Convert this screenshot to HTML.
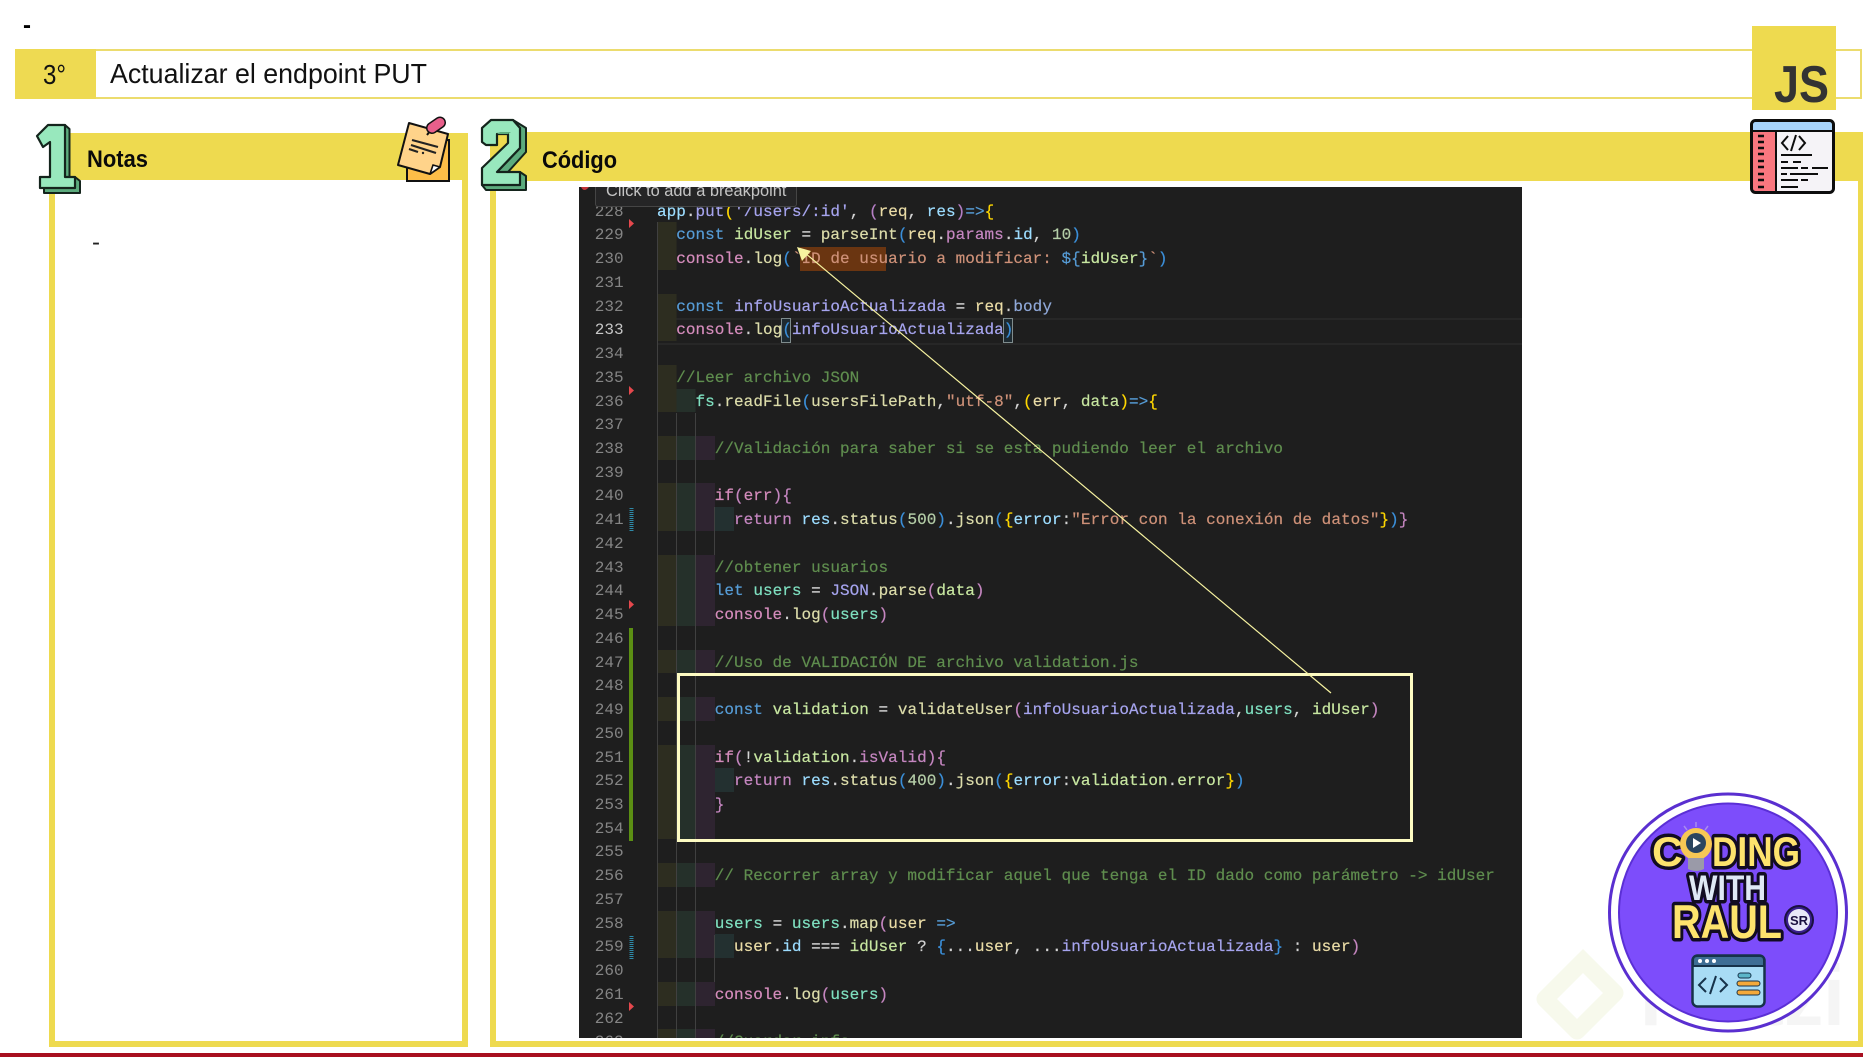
<!DOCTYPE html>
<html lang="es"><head><meta charset="utf-8"><title>Actualizar el endpoint PUT</title>
<style>
html,body{margin:0;padding:0;background:#fff}
body{position:relative;width:1863px;height:1057px;overflow:hidden;font-family:"Liberation Sans",sans-serif}
svg.o{position:absolute;left:0;top:0;width:1863px;height:1057px}
#code{position:absolute;left:579px;top:187px;width:943px;height:851px;background:#1e1e1e;overflow:hidden}
#code .abs{position:absolute}
#nums{position:absolute;left:0;top:13.66px;width:44.6px;margin:0;text-align:right;font:16px/23.74px "Liberation Mono",monospace;color:#858585;letter-spacing:.03px}
#nums b{font-weight:normal;color:#c6c6c6}
#lines{position:absolute;left:78px;top:11.66px;width:865px;font:16px/27.74px "Liberation Mono",monospace;letter-spacing:.03px;color:#d4d4d4;-webkit-text-stroke:.2px}
.l{height:23.74px;white-space:pre}
.i1{padding-left:19.26px;background:linear-gradient(90deg,#2d2d20 19.26px,transparent 0)}
.i2{padding-left:38.52px;background:linear-gradient(90deg,#2d2d20 19.26px,#25302a 0,#25302a 38.52px,transparent 0)}
.i3{padding-left:57.78px;background:linear-gradient(90deg,#2d2d20 19.26px,#25302a 0,#25302a 38.52px,#2e2430 0,#2e2430 57.78px,transparent 0)}
.i4{padding-left:77.04px;background:linear-gradient(90deg,#2d2d20 19.26px,#25302a 0,#25302a 38.52px,#2e2430 0,#2e2430 57.78px,#233030 0,#233030 77.04px,transparent 0)}
.k{color:#569cd6}.f{color:#dcdcaa}.c{color:#5f8d4e}.s{color:#ce9178}.n{color:#b5cea8}.g{color:#c7e6a0}
.p{color:#d58cbc}.y{color:#ffd700}.b{color:#3b8fd9}.m{color:#c586c0}.u{color:#a6a4ee}.t{color:#7fe0c0}.r{color:#eadca6}.a{color:#9cdcfe}.o2{color:#b57fc6}
.gd{position:absolute;width:1px;background:#404040}
</style></head><body>

<svg class="o" viewBox="0 0 1863 1057" xmlns="http://www.w3.org/2000/svg">
  <text x="23" y="33" font-family="Liberation Sans" font-weight="700" font-size="24" fill="#000">-</text>
  <rect x="16" y="50" width="1845" height="48" fill="#fff" stroke="#ecdc6e" stroke-width="2"/>
  <rect x="15" y="49" width="81" height="50" fill="#eeda52"/>
  <text x="43" y="84" font-family="Liberation Sans" font-size="28" textLength="23" lengthAdjust="spacingAndGlyphs" fill="#111">3°</text>
  <text x="110" y="83" font-family="Liberation Sans" font-size="28" textLength="317" lengthAdjust="spacingAndGlyphs" fill="#111">Actualizar el endpoint PUT</text>

  <rect x="70" y="133" width="398" height="47" fill="#eeda4f"/>
  <rect x="49" y="180" width="6" height="867" fill="#eeda4f"/>
  <rect x="462" y="180" width="6" height="867" fill="#eeda4f"/>
  <rect x="49" y="1041" width="419" height="6" fill="#eeda4f"/>
  <text x="87" y="167" font-family="Liberation Sans" font-weight="700" font-size="24" textLength="61" lengthAdjust="spacingAndGlyphs" fill="#0a0a0a">Notas</text>
  <text x="92" y="250" font-family="Liberation Sans" font-size="24" fill="#222">-</text>

  <rect x="490" y="132" width="1373" height="49" fill="#eeda4f"/>
  <rect x="490" y="181" width="6" height="866" fill="#eeda4f"/>
  <rect x="1858" y="181" width="5" height="866" fill="#eeda4f"/>
  <rect x="490" y="1041" width="1373" height="6" fill="#eeda4f"/>
  <text x="542" y="168" font-family="Liberation Sans" font-weight="700" font-size="24" textLength="75" lengthAdjust="spacingAndGlyphs" fill="#0a0a0a">Código</text>
  <rect x="0" y="1053" width="1863" height="4" fill="#a80f20"/>

  <!-- watermark -->
  <g fill="none" stroke="#f7f9ec" stroke-width="17" stroke-linejoin="round"><path d="M1577 955 L1615 993 L1577 1031 L1545 999 L1577 967"/></g>
  <text x="1640" y="1025" font-family="Liberation Sans" font-weight="700" font-size="85" textLength="205" lengthAdjust="spacingAndGlyphs" fill="#f5f5f5">Platzi</text>
</svg>

<div id="code">
  <div class="abs" style="left:221px;top:60px;width:86px;height:24px;background:#6a3511"></div>
  <div class="abs" style="left:78px;top:131px;width:865px;height:23px;border-top:2px solid #272727;border-bottom:2px solid #272727"></div>
  <div class="abs" style="left:202px;top:131px;width:8px;height:23px;border:1px solid #7f8c8d;background:#1e2a30"></div>
  <div class="abs" style="left:424px;top:131px;width:8px;height:23px;border:1px solid #7f8c8d;background:#1e2a30"></div>
  <pre id="nums">228
229
230
231
232
<b>233</b>
234
235
236
237
238
239
240
241
242
243
244
245
246
247
248
249
250
251
252
253
254
255
256
257
258
259
260
261
262
263</pre>
  <div id="lines">
<div class="l"><span class="a">app</span>.<span class="u">put</span><span class="y">(</span><span class="u">'/users/:id'</span>, <span class="o2">(</span><span class="r">req</span>, <span class="a">res</span><span class="o2">)</span><span class="k">=&gt;</span><span class="y">{</span></div>
<div class="l i1"><span class="k">const</span> <span class="g">idUser</span> = <span class="f">parseInt</span><span class="b">(</span><span class="r">req</span>.<span class="m">params</span>.<span class="a">id</span>, <span class="n">10</span><span class="b">)</span></div>
<div class="l i1"><span class="p">console</span>.<span class="f">log</span><span class="b">(</span><span class="s">`ID de usuario a modificar: </span><span class="k">${</span><span class="g">idUser</span><span class="k">}</span><span class="s">`</span><span class="b">)</span></div>
<div class="l"></div>
<div class="l i1"><span class="k">const</span> <span class="u">infoUsuarioActualizada</span> = <span class="r">req</span>.<span class="k" style="color:#8fa8d8">body</span></div>
<div class="l i1"><span class="p">console</span>.<span class="f">log</span><span class="b">(</span><span class="u">infoUsuarioActualizada</span><span class="b">)</span></div>
<div class="l"></div>
<div class="l i1"><span class="c">//Leer archivo JSON</span></div>
<div class="l i2"><span class="t">fs</span>.<span class="f">readFile</span><span class="b">(</span><span class="f">usersFilePath</span>,<span class="s">"utf-8"</span>,<span class="y">(</span><span class="r">err</span>, <span class="g">data</span><span class="y">)</span><span class="k">=&gt;</span><span class="y">{</span></div>
<div class="l"></div>
<div class="l i3"><span class="c">//Validación para saber si se esta pudiendo leer el archivo</span></div>
<div class="l"></div>
<div class="l i3"><span class="p">if</span><span class="m">(</span><span class="p">err</span><span class="m">){</span></div>
<div class="l i4"><span class="m">return</span> <span class="a">res</span>.<span class="f">status</span><span class="b">(</span><span class="n">500</span><span class="b">)</span>.<span class="f">json</span><span class="b">(</span><span class="y">{</span><span class="a">error</span>:<span class="s">"Error con la conexión de datos"</span><span class="y">}</span><span class="b">)</span><span class="m">}</span></div>
<div class="l"></div>
<div class="l i3"><span class="c">//obtener usuarios</span></div>
<div class="l i3"><span class="k">let</span> <span class="t">users</span> = <span class="u">JSON</span>.<span class="f">parse</span><span class="m">(</span><span class="g">data</span><span class="m">)</span></div>
<div class="l i3"><span class="p">console</span>.<span class="f">log</span><span class="m">(</span><span class="t">users</span><span class="m">)</span></div>
<div class="l"></div>
<div class="l i3"><span class="c">//Uso de VALIDACIÓN DE archivo validation.js</span></div>
<div class="l"></div>
<div class="l i3"><span class="k">const</span> <span class="g">validation</span> = <span class="f">validateUser</span><span class="m">(</span><span class="u">infoUsuarioActualizada</span>,<span class="t">users</span>, <span class="g">idUser</span><span class="m">)</span></div>
<div class="l"></div>
<div class="l i3"><span class="p">if</span><span class="m">(</span>!<span class="g">validation</span>.<span class="m">isValid</span><span class="m">){</span></div>
<div class="l i4"><span class="m">return</span> <span class="a">res</span>.<span class="f">status</span><span class="b">(</span><span class="n">400</span><span class="b">)</span>.<span class="f">json</span><span class="b">(</span><span class="y">{</span><span class="a">error</span>:<span class="g">validation</span>.<span class="g">error</span><span class="y">}</span><span class="b">)</span></div>
<div class="l i3"><span class="m">}</span></div>
<div class="l i3"></div>
<div class="l"></div>
<div class="l i3"><span class="c">// Recorrer array y modificar aquel que tenga el ID dado como parámetro -&gt; idUser</span></div>
<div class="l"></div>
<div class="l i3"><span class="t">users</span> = <span class="t">users</span>.<span class="f">map</span><span class="m">(</span><span class="r">user</span> <span class="k">=&gt;</span></div>
<div class="l i4"><span class="r">user</span>.<span class="a">id</span> === <span class="g">idUser</span> ? <span class="b">{</span>...<span class="r">user</span>, ...<span class="u">infoUsuarioActualizada</span><span class="b">}</span> : <span class="r">user</span><span class="m">)</span></div>
<div class="l"></div>
<div class="l i3"><span class="p">console</span>.<span class="f">log</span><span class="m">(</span><span class="t">users</span><span class="m">)</span></div>
<div class="l"></div>
<div class="l i3"><span class="c">//Guardar info</span></div>
  </div>
  <div class="gd" style="left:78px;top:35px;bottom:0"></div>
  <div class="gd" style="left:97px;top:226px;bottom:0"></div>
  <div class="gd" style="left:116px;top:226px;bottom:0"></div>
  <div class="gd" style="left:135px;top:320px;height:47.5px"></div>
  <div class="gd" style="left:135px;top:747.6px;height:47.5px"></div>
  <div class="abs" style="left:16px;top:0;width:202px;height:20px;box-sizing:border-box;background:#252526;border:1px solid #454545;border-top:0;border-radius:0 0 3px 3px"></div>
  <div class="abs" style="left:27px;top:-7px;font:16.4px/22px 'Liberation Sans',sans-serif;color:#c4c4c4;white-space:pre">Click to add a breakpoint</div>
  <svg class="abs" style="left:0;top:0" width="943" height="851" viewBox="579 187 943 851" xmlns="http://www.w3.org/2000/svg">
    <polygon points="629,219 634,223.5 629,228" fill="#e5484d"/>
    <polygon points="629,386 634,390.5 629,395" fill="#e5484d"/>
    <polygon points="629,600 634,604.5 629,609" fill="#e5484d"/>
    <polygon points="629,1002 634,1006.5 629,1011" fill="#e5484d"/>
    <path d="M581 187 Q584 193 589 187Z" fill="#c0343a"/>
    <line x1="631.5" y1="508" x2="631.5" y2="532" stroke="#2f8aa8" stroke-width="4" stroke-dasharray="1 1"/>
    <line x1="631.5" y1="936" x2="631.5" y2="960" stroke="#2f8aa8" stroke-width="4" stroke-dasharray="1 1"/>
    <rect x="629" y="628" width="4" height="213" fill="#5b8f13"/>
    <rect x="678.5" y="674.5" width="733" height="166" fill="none" stroke="#fdfbc2" stroke-width="3"/>
    <line x1="1331" y1="693" x2="805" y2="253" stroke="#f7f3a0" stroke-width="1.2"/>
    <polygon points="797,247 811,251 802,261" fill="#f7f3a0"/>
  </svg>
</div>

<svg class="o" viewBox="0 0 1863 1057" xmlns="http://www.w3.org/2000/svg">
  <!-- digit 1 -->
  <path d="M40 177 L44 181 V193 H80 V181 L75 177 Z M65 125 L69.5 129 V177 H65 Z" fill="#5cab7d" stroke="#14241c" stroke-width="2" stroke-linejoin="round"/>
  <path d="M37 136 L48 125 H65 V177 H75 V188 H40 V177 H50 V142 L43 147 Z" fill="#98e8bd" stroke="#14241c" stroke-width="2.2" stroke-linejoin="round"/>
  <!-- digit 2 -->
  <path d="M513 120 L526 128 V152 L508 172 H520 L526 176 V190 H486 L482 185 H520 V172 H497 L520 148 V128 Z" fill="#5cab7d" stroke="#14241c" stroke-width="2" stroke-linejoin="round"/>
  <path d="M482 128 L491 120 H513 L520 128 V148 L497 172 H520 V185 H482 V168 L508 143 V134 H497 V145 H486 L482 142 Z" fill="#98e8bd" stroke="#14241c" stroke-width="2.2" stroke-linejoin="round"/>
  <path d="M497 134 L500 132 H511 L508 134 Z" fill="#5cab7d"/>
  <!-- note icon -->
  <rect x="407" y="140" width="42" height="41" fill="#fdbe48" stroke="#111" stroke-width="2"/>
  <path d="M409 123 L448 134 L440 167 L430 174 L398 165 Z" fill="#ffd38a" stroke="#111" stroke-width="2" stroke-linejoin="round"/>
  <path d="M440 167 L433 165 L430 174 Z" fill="#fff" stroke="#111" stroke-width="1.6" stroke-linejoin="round"/>
  <path d="M412 140 L438 147 M411 145 L436 153 M409 149 L418 152" stroke="#222" stroke-width="2.2" fill="none"/>
  <circle cx="423" cy="153" r="1.2" fill="#222"/>
  <path d="M427 135 L433 127" stroke="#111" stroke-width="2"/>
  <path d="M432 128 L440 122.5" stroke="#111" stroke-width="12" stroke-linecap="round"/>
  <path d="M432 128 L440 122.5" stroke="#e85f8b" stroke-width="9" stroke-linecap="round"/>
  <!-- JS -->
  <rect x="1752" y="26" width="84" height="84" fill="#eeda4f"/>
  <text x="1774" y="102" font-family="Liberation Sans" font-weight="700" font-size="52" textLength="55" lengthAdjust="spacingAndGlyphs" fill="#333">JS</text>
  <!-- code icon -->
  <rect x="1751.5" y="120.5" width="82" height="72" rx="4" fill="#f5f3f7"/>
  <rect x="1752" y="121" width="81" height="10" fill="#a8d4fb"/>
  <rect x="1752" y="131" width="24" height="61" fill="#f9777f"/>
  <rect x="1751.5" y="120.5" width="82" height="72" rx="4" fill="none" stroke="#0d0d0d" stroke-width="3"/>
  <path d="M1752 131 H1833 M1776 131 V192" stroke="#0d0d0d" stroke-width="2" fill="none"/>
  <path d="M1758 136H1764M1758 142H1764M1758 148H1764M1758 154H1764M1758 161H1764M1758 167H1764M1758 174H1764M1758 180H1764M1758 187H1764" stroke="#0d0d0d" stroke-width="2.4"/>
  <path d="M1788 136 L1782 143 L1788 150 M1799 136 L1805 143 L1799 150 M1796 135 L1791 151" stroke="#0d0d0d" stroke-width="2" fill="none"/>
  <path d="M1781 155H1812M1781 162H1788M1793 162H1801M1781 168H1798M1801 168H1808M1812 168H1828M1781 174H1787M1790 174H1818M1781 180H1798M1801 180H1808M1781 187H1798" stroke="#0d0d0d" stroke-width="2"/>
  <!-- badge -->
  <circle cx="1728" cy="912.5" r="118.5" fill="#fff" stroke="#5a2fd0" stroke-width="3"/>
  <circle cx="1728" cy="912.5" r="109" fill="#7d4dfb" stroke="#5b2fd6" stroke-width="2"/>
  <g font-family="Liberation Sans" font-weight="700" stroke="#120c22" stroke-width="7" stroke-linejoin="round" paint-order="stroke">
    <text x="1652" y="866" font-size="42" textLength="31" lengthAdjust="spacingAndGlyphs" fill="#fde36d">C</text>
    <text x="1712" y="866" font-size="42" textLength="88" lengthAdjust="spacingAndGlyphs" fill="#fde36d">DING</text>
    <text x="1689" y="900" font-size="35" textLength="77" lengthAdjust="spacingAndGlyphs" fill="#dfe8f5">WITH</text>
    <text x="1672" y="938" font-size="47" textLength="110" lengthAdjust="spacingAndGlyphs" fill="#fde36d">RAUL</text>
  </g>
  <circle cx="1799" cy="920" r="14" fill="#3a1f8f" stroke="#1a1040" stroke-width="2"/>
  <circle cx="1799" cy="920" r="11" fill="#e8e8f8"/>
  <text x="1799" y="925" text-anchor="middle" font-family="Liberation Sans" font-weight="700" font-size="13" fill="#1a1040">SR</text>
  <!-- bulb -->
  <path d="M1696 822V827M1684 826L1687 830M1708 826L1705 830" stroke="#a98bf0" stroke-width="1.5"/>
  <circle cx="1696" cy="844" r="16" fill="#f7c855"/>
  <path d="M1688 858 H1704 V869 Q1696 873 1688 869 Z" fill="#9a9aa8"/>
  <circle cx="1696" cy="843" r="10" fill="#2a4560"/>
  <polygon points="1693,838 1701,843 1693,848" fill="#fff"/>
  <!-- window -->
  <rect x="1692.5" y="955.5" width="72" height="51" rx="5" fill="#a8dcf5" stroke="#16324a" stroke-width="2.5"/>
  <path d="M1693 966 V960 Q1693 956 1697 956 H1760 Q1764 956 1764 960 V966 Z" fill="#3e6e95" stroke="#16324a" stroke-width="2"/>
  <circle cx="1700" cy="961" r="2" fill="#fff"/><circle cx="1707" cy="961" r="2" fill="#fff"/><circle cx="1714" cy="961" r="2" fill="#fff"/>
  <path d="M1706 978 L1699 985 L1706 992 M1720 978 L1727 985 L1720 992 M1716 976 L1710 994" stroke="#16324a" stroke-width="2" fill="none"/>
  <rect x="1738" y="973" width="13" height="5" rx="2.5" fill="#5cb6c9" stroke="#16324a"/>
  <rect x="1737" y="981" width="23" height="5" rx="2.5" fill="#f4a93a" stroke="#16324a"/>
  <rect x="1737" y="990" width="23" height="5" rx="2.5" fill="#f4a93a" stroke="#16324a"/>
</svg>
</body></html>
